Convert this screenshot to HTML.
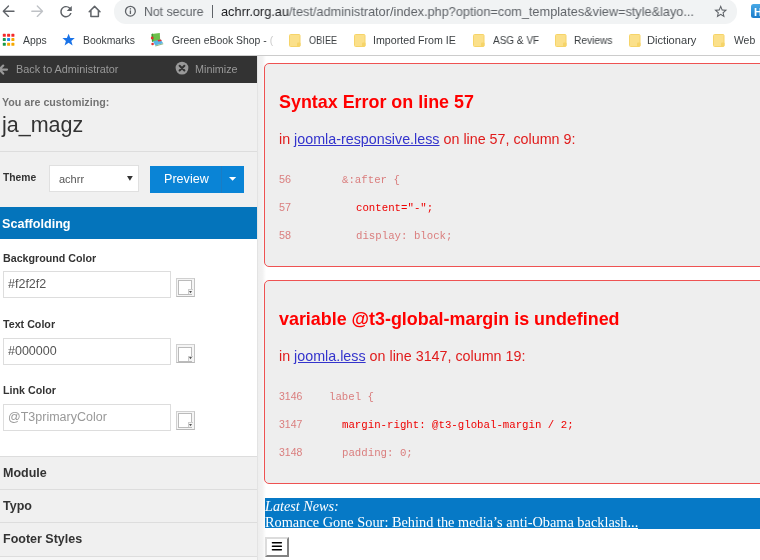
<!DOCTYPE html>
<html><head><meta charset="utf-8">
<style>
*{margin:0;padding:0;box-sizing:border-box}
html,body{width:760px;height:560px;overflow:hidden;background:#fff;font-family:"Liberation Sans",sans-serif;position:relative}
.a{position:absolute;white-space:nowrap;line-height:1;will-change:transform}
.mono{font-family:"Liberation Mono",monospace}
.bm{top:36px;font-size:10.4px;color:#3c4043}
.serif{font-family:"Liberation Serif",serif}
</style></head><body>

<!-- toolbar -->
<svg class="a" style="left:0;top:0" width="110" height="24" viewBox="0 0 110 24" fill="none" stroke-linecap="round" stroke-linejoin="round">
 <g stroke="#5f6368" stroke-width="1.35"><path d="M3.3 11.2H14M8.5 6L3.3 11.2L8.5 16.4"/></g>
 <g stroke="#bfc2c6" stroke-width="1.35"><path d="M31.8 11.2H42.5M37.3 6L42.5 11.2L37.3 16.4"/></g>
 <path transform="translate(57.4 3.0) scale(0.72)" d="M17.65 6.35A7.958 7.958 0 0 0 12 4c-4.42 0-7.99 3.58-7.99 8s3.57 8 7.99 8c3.73 0 6.84-2.55 7.73-6h-2.08A5.99 5.99 0 0 1 12 18c-3.310 0-6-2.69-6-6s2.69-6 6-6c1.66 0 3.14.69 4.22 1.78L13 11h7V4l-2.350 2.350z" fill="#5f6368" stroke="none"/>
 
 <path d="M89.2 11.8L94.6 6.4L100 11.8M90.9 10.5V16.6H98.4V10.5" stroke="#5f6368" stroke-width="1.5"/>
</svg>
<div class="a" style="left:114px;top:-1px;width:623px;height:24.5px;background:#f1f3f4;border-radius:12px"></div>
<svg class="a" style="left:124px;top:5px" width="13" height="13" viewBox="0 0 13 13"><circle cx="6.4" cy="6.2" r="4.9" fill="none" stroke="#5f6368" stroke-width="1.3"/><rect x="5.75" y="5.4" width="1.3" height="3.6" fill="#5f6368"/><rect x="5.75" y="3.2" width="1.3" height="1.3" fill="#5f6368"/></svg>
<div class="a" style="left:144.3px;top:5.7px;font-size:12.8px;color:#5f6368;transform-origin:0 0;transform:scaleX(0.96)">Not secure</div>
<div class="a" style="left:211.5px;top:5px;width:1.2px;height:13px;background:#5f6368"></div>
<div class="a" style="left:220.5px;top:5.7px;font-size:12.8px;color:#202124;transform-origin:0 0;transform:scaleX(0.994)">achrr.org.au<span style="color:#5f6368">/test/administrator/index.php?option=com_templates&amp;view=style&amp;layo...</span></div>
<svg class="a" style="left:713px;top:4px" width="16" height="16" viewBox="0 0 16 16"><path transform="translate(-0.1 -0.2) scale(0.65)" d="M22 9.24l-7.19-.62L12 2 9.19 8.63 2 9.24l5.46 4.73L5.82 21 12 17.27 18.18 21l-1.63-7.03L22 9.24zM12 15.4l-3.76 2.27 1-4.28-3.32-2.88 4.38-.38L12 6.1l1.71 4.04 4.38.38-3.32 2.88 1 4.28L12 15.4z" fill="#5f6368"/></svg>
<div class="a" style="left:751px;top:4.3px;width:20px;height:14.2px;border-radius:2.5px;background:linear-gradient(#48a9e6,#1a7bc9)"></div>
<div class="a" style="left:754.3px;top:6.5px;font-size:11px;font-weight:bold;color:#fff">H</div>

<!-- bookmarks bar -->
<svg class="a" style="left:2px;top:33px" width="14" height="14" viewBox="0 0 14 14">
 <rect x="0.8" y="0.8" width="3" height="3" rx="0.6" fill="#f42a2a"/><rect x="5.1" y="0.8" width="3" height="3" rx="0.6" fill="#f42a2a"/><rect x="9.4" y="0.8" width="3" height="3" rx="0.6" fill="#f42a2a"/>
 <rect x="0.8" y="5.1" width="3" height="3" rx="0.6" fill="#1a9a4a"/><rect x="5.1" y="5.1" width="3" height="3" rx="0.6" fill="#1e88f0"/><rect x="9.4" y="5.1" width="3" height="3" rx="0.6" fill="#f5a800"/>
 <rect x="0.8" y="9.8" width="3" height="3" rx="0.6" fill="#1a9a4a"/><rect x="5.1" y="9.8" width="3" height="3" rx="0.6" fill="#f5a800"/><rect x="9.4" y="9.8" width="3" height="3" rx="0.6" fill="#f5a800"/>
</svg>
<div class="a bm" style="left:23px">Apps</div>
<svg class="a" style="left:61.5px;top:32.5px" width="14" height="14" viewBox="0 0 14 14"><path d="M6.6 0.7L8.3 5L12.8 5.1L9.3 7.9L10.6 12.4L6.6 9.8L2.6 12.4L3.9 7.9L0.4 5.1L4.9 5Z" fill="#1a73e8"/></svg>
<div class="a bm" style="left:83px">Bookmarks</div>
<svg class="a" style="left:150px;top:32px" width="15" height="16" viewBox="0 0 15 16">
 <path d="M1.6 2L9.8 1L10.2 8.8L2 9.8Z" fill="#6cc04a"/><path d="M1.6 2L3 1.5L3.4 9.5L2 9.8Z" fill="#3f9a35"/>
 <circle cx="2.2" cy="6" r="1.4" fill="#e23030"/>
 <path d="M3 9.2L10.5 7.6L13.2 11.2L5.2 13.6Z" fill="#5ab4e6"/><path d="M5.2 13.6L13.2 11.2L13.3 12.3L5.4 14.6Z" fill="#8fb98a"/>
 <path d="M7.5 8L11 7.4L11.8 9L8.3 9.6Z" fill="#e23030"/><circle cx="2.6" cy="12" r="1.3" fill="#e23030"/>
</svg>
<div class="a bm" style="left:171.5px">Green eBook Shop - <span style="color:#ccc">(</span></div>
<svg class="a" style="left:289.3px;top:33.5px" width="12" height="13" viewBox="0 0 12 13"><rect x="0.5" y="0.5" width="10.5" height="12" rx="1" fill="#fbe08a" stroke="#f6d469"/><rect x="8" y="8.5" width="3.5" height="4" rx="1" fill="#f6d469"/></svg>
<div class="a bm" style="left:309.3px;transform-origin:0 0;transform:scaleX(0.887)">OBIEE</div>
<svg class="a" style="left:353.8px;top:33.5px" width="12" height="13" viewBox="0 0 12 13"><rect x="0.5" y="0.5" width="10.5" height="12" rx="1" fill="#fbe08a" stroke="#f6d469"/><rect x="8" y="8.5" width="3.5" height="4" rx="1" fill="#f6d469"/></svg>
<div class="a bm" style="left:373.4px;transform-origin:0 0;transform:scaleX(1.026)">Imported From IE</div>
<svg class="a" style="left:472.8px;top:33.5px" width="12" height="13" viewBox="0 0 12 13"><rect x="0.5" y="0.5" width="10.5" height="12" rx="1" fill="#fbe08a" stroke="#f6d469"/><rect x="8" y="8.5" width="3.5" height="4" rx="1" fill="#f6d469"/></svg>
<div class="a bm" style="left:492.8px;transform-origin:0 0;transform:scaleX(0.9625)">ASG &amp; VF</div>
<svg class="a" style="left:555.3px;top:33.5px" width="12" height="13" viewBox="0 0 12 13"><rect x="0.5" y="0.5" width="10.5" height="12" rx="1" fill="#fbe08a" stroke="#f6d469"/><rect x="8" y="8.5" width="3.5" height="4" rx="1" fill="#f6d469"/></svg>
<div class="a bm" style="left:574.3px;transform-origin:0 0;transform:scaleX(0.98)">Reviews</div>
<svg class="a" style="left:628.5px;top:33.5px" width="12" height="13" viewBox="0 0 12 13"><rect x="0.5" y="0.5" width="10.5" height="12" rx="1" fill="#fbe08a" stroke="#f6d469"/><rect x="8" y="8.5" width="3.5" height="4" rx="1" fill="#f6d469"/></svg>
<div class="a bm" style="left:647.4px;transform-origin:0 0;transform:scaleX(1.069)">Dictionary</div>
<svg class="a" style="left:713.3px;top:33.5px" width="12" height="13" viewBox="0 0 12 13"><rect x="0.5" y="0.5" width="10.5" height="12" rx="1" fill="#fbe08a" stroke="#f6d469"/><rect x="8" y="8.5" width="3.5" height="4" rx="1" fill="#f6d469"/></svg>
<div class="a bm" style="left:733.5px">Web</div>
<div class="a" style="left:0;top:54.5px;width:760px;height:1px;background:#ccc"></div>

<!-- sidebar -->
<div class="a" style="left:0;top:56px;width:257px;height:504px;background:#f0f0f0"></div>
<div class="a" style="left:0;top:56px;width:257px;height:27px;background:#333"></div>
<div class="a" style="left:15.5px;top:63.7px;font-size:10.85px;color:#999">Back to Administrator</div>
<div class="a" style="left:195.3px;top:63.6px;font-size:10.8px;color:#999">Minimize</div>

<svg class="a" style="left:0;top:62px" width="10" height="16" viewBox="0 0 10 16"><path d="M7 7.6H0.5M3.2 3.6L-0.6 7.6L3.2 11.6" fill="none" stroke="#999" stroke-width="2.2" stroke-linecap="round" stroke-linejoin="round"/></svg>
<svg class="a" style="left:175px;top:61px" width="14" height="14" viewBox="0 0 14 14"><circle cx="7" cy="7.1" r="6.4" fill="#999"/><path d="M4.6 4.7L9.4 9.5M9.4 4.7L4.6 9.5" stroke="#333" stroke-width="2" stroke-linecap="round"/></svg>
<div class="a" style="left:2px;top:97px;font-size:10.7px;font-weight:bold;color:#737373">You are customizing:</div>
<div class="a" style="left:2px;top:115.4px;font-size:21.5px;color:#333">ja_magz</div>
<div class="a" style="left:0;top:151px;width:257px;height:1px;background:#ddd"></div>

<div class="a" style="left:3px;top:173.2px;font-size:10.3px;font-weight:bold;color:#333">Theme</div>
<div class="a" style="left:48.5px;top:165px;width:90px;height:26.5px;background:#fff;border:1px solid #e0e0e0"></div>
<div class="a" style="left:58.5px;top:173.5px;font-size:11px;color:#555">achrr</div>
<svg class="a" style="left:126.5px;top:175.5px" width="6" height="5" viewBox="0 0 6 5"><path d="M0 0H5.8L2.9 4.8Z" fill="#333"/></svg>
<div class="a" style="left:150px;top:165.5px;width:94px;height:26.5px;background:#0a84d6"></div>
<div class="a" style="left:221px;top:165.5px;width:1px;height:26.5px;background:#1a7cc4"></div>
<svg class="a" style="left:229px;top:177px" width="8" height="4" viewBox="0 0 8 4"><path d="M0 0H7.2L3.6 3.7Z" fill="#fff"/></svg>
<div class="a" style="left:163.5px;top:172.5px;font-size:12.6px;color:#fff">Preview</div>

<div class="a" style="left:0;top:207px;width:257px;height:32px;background:#0474bb"></div>
<div class="a" style="left:2px;top:217.5px;font-size:12.6px;font-weight:bold;color:#fff">Scaffolding</div>

<div class="a" style="left:0;top:239px;width:257px;height:217px;background:#fff"></div>
<div class="a" style="left:2.5px;top:253px;font-size:10.7px;font-weight:bold;color:#333">Background Color</div>
<div class="a" style="left:2.5px;top:271px;width:168px;height:26.5px;border:1px solid #ddd;background:#fff"></div>
<div class="a" style="left:8px;top:278px;font-size:12.5px;color:#555">#f2f2f2</div>

<div class="a" style="left:176px;top:277.5px;width:19px;height:19.2px;border:1px solid #d0d0d0;border-bottom-color:#b8b8b8;border-right-color:#c4c4c4;background:#f5f5f5"></div>
<div class="a" style="left:178.3px;top:280.0px;width:14px;height:14.6px;border:1px solid #bbb;background:#fff"></div>
<div class="a" style="left:187.5px;top:289.0px;width:5px;height:5px;border-left:1px solid #ccc;border-top:1px solid #ccc;background:#f4f4f4"></div>
<svg class="a" style="left:189px;top:290.8px" width="3" height="3" viewBox="0 0 3 3"><path d="M0 0H3L1.5 2.2Z" fill="#555"/></svg>
<div class="a" style="left:3px;top:319px;font-size:10.7px;font-weight:bold;color:#333">Text Color</div>
<div class="a" style="left:2.5px;top:337.5px;width:168px;height:26.5px;border:1px solid #ddd;background:#fff"></div>
<div class="a" style="left:8px;top:344.5px;font-size:12.5px;color:#555">#000000</div>

<div class="a" style="left:176px;top:344px;width:19px;height:19.2px;border:1px solid #d0d0d0;border-bottom-color:#b8b8b8;border-right-color:#c4c4c4;background:#f5f5f5"></div>
<div class="a" style="left:178.3px;top:346.5px;width:14px;height:14.6px;border:1px solid #bbb;background:#fff"></div>
<div class="a" style="left:187.5px;top:355.5px;width:5px;height:5px;border-left:1px solid #ccc;border-top:1px solid #ccc;background:#f4f4f4"></div>
<svg class="a" style="left:189px;top:357.3px" width="3" height="3" viewBox="0 0 3 3"><path d="M0 0H3L1.5 2.2Z" fill="#555"/></svg>
<div class="a" style="left:2.5px;top:385px;font-size:10.7px;font-weight:bold;color:#333">Link Color</div>
<div class="a" style="left:2.5px;top:404px;width:168px;height:26.5px;border:1px solid #ddd;background:#fff"></div>
<div class="a" style="left:8px;top:410.5px;font-size:12.5px;color:#999">@T3primaryColor</div>

<div class="a" style="left:176px;top:410.5px;width:19px;height:19.2px;border:1px solid #d0d0d0;border-bottom-color:#b8b8b8;border-right-color:#c4c4c4;background:#f5f5f5"></div>
<div class="a" style="left:178.3px;top:413.0px;width:14px;height:14.6px;border:1px solid #bbb;background:#fff"></div>
<div class="a" style="left:187.5px;top:422.0px;width:5px;height:5px;border-left:1px solid #ccc;border-top:1px solid #ccc;background:#f4f4f4"></div>
<svg class="a" style="left:189px;top:423.8px" width="3" height="3" viewBox="0 0 3 3"><path d="M0 0H3L1.5 2.2Z" fill="#555"/></svg>
<div class="a" style="left:0;top:456px;width:257px;height:1px;background:#ddd"></div>
<div class="a" style="left:2.5px;top:466.5px;font-size:12.5px;font-weight:bold;color:#333">Module</div>
<div class="a" style="left:0;top:489px;width:257px;height:1px;background:#ddd"></div>
<div class="a" style="left:2.5px;top:499.5px;font-size:12.5px;font-weight:bold;color:#333">Typo</div>
<div class="a" style="left:0;top:522px;width:257px;height:1px;background:#ddd"></div>
<div class="a" style="left:2.5px;top:532.8px;font-size:12.5px;font-weight:bold;color:#333">Footer Styles</div>
<div class="a" style="left:0;top:556px;width:257px;height:1px;background:#ddd"></div>
<div class="a" style="left:0;top:557px;width:257px;height:3px;background:#f6f6f6"></div>

<!-- content shadow -->
<div class="a" style="left:257px;top:56px;width:9px;height:504px;background:linear-gradient(to right,#ddd,#eee 15%,#f2f2f2 60%,#fff)"></div>

<!-- error box 1 -->
<div class="a" style="left:264px;top:63px;width:510px;height:204px;background:#eee;border:1px solid #ee5252;border-radius:5px"></div>
<div class="a" style="left:279px;top:93.6px;font-size:17.9px;font-weight:bold;color:#f00">Syntax Error on line 57</div>
<div class="a" style="left:279px;top:131.5px;font-size:14.3px;color:#e01b1b">in <span style="color:#3333cc;text-decoration:underline">joomla-responsive.less</span> on line 57, column 9:</div>
<div class="a" style="left:279px;top:173.6px;font-size:10.8px;color:#da7e7e">56</div>
<div class="a mono" style="left:342px;top:174.5px;font-size:10.72px;color:#da7e7e">&amp;:after {</div>
<div class="a" style="left:279px;top:201.6px;font-size:10.8px;color:#da7e7e">57</div>
<div class="a mono" style="left:356px;top:202.5px;font-size:10.72px;color:#e00">content="-";</div>
<div class="a" style="left:279px;top:229.6px;font-size:10.8px;color:#da7e7e">58</div>
<div class="a mono" style="left:356px;top:230.5px;font-size:10.72px;color:#da7e7e">display: block;</div>

<!-- error box 2 -->
<div class="a" style="left:264px;top:280px;width:510px;height:204.2px;background:#eee;border:1px solid #ee5252;border-radius:5px"></div>
<div class="a" style="left:279px;top:310.6px;font-size:17.9px;font-weight:bold;color:#f00">variable @t3-global-margin is undefined</div>
<div class="a" style="left:279px;top:348.5px;font-size:14.3px;color:#e01b1b">in <span style="color:#3333cc;text-decoration:underline">joomla.less</span> on line 3147, column 19:</div>
<div class="a" style="left:279px;top:391px;font-size:10.5px;color:#da7e7e">3146</div>
<div class="a mono" style="left:328.8px;top:391.8px;font-size:10.72px;color:#da7e7e">label {</div>
<div class="a" style="left:279px;top:419px;font-size:10.5px;color:#da7e7e">3147</div>
<div class="a mono" style="left:342px;top:419.8px;font-size:10.72px;color:#e00">margin-right: @t3-global-margin / 2;</div>
<div class="a" style="left:279px;top:447px;font-size:10.5px;color:#da7e7e">3148</div>
<div class="a mono" style="left:342px;top:447.8px;font-size:10.72px;color:#da7e7e">padding: 0;</div>

<!-- news -->
<div class="a" style="left:264.5px;top:497.5px;width:496px;height:31.2px;background:#0679c6"></div>
<div class="a serif" style="left:265px;top:499px;font-size:14.2px;font-style:italic;color:#fff">Latest News:</div>
<div class="a serif" style="left:265px;top:515px;font-size:14.33px;color:#fff">Romance Gone Sour: Behind the media’s anti-Obama backlash...</div>
<div class="a" style="left:265px;top:527.6px;width:372.5px;height:1.1px;background:#fff"></div>

<div class="a" style="left:264.8px;top:537px;width:24.2px;height:20px;background:#fff;border:2px solid;border-color:#dcdcdc #828282 #828282 #dcdcdc"></div>
<svg class="a" style="left:270px;top:540px" width="14" height="12" viewBox="0 0 14 12"><path d="M2.4 2.7H11.4M2.4 6.2H11.4M2.4 9.8H11.4" stroke="#000" stroke-width="1.4" stroke-linecap="round"/></svg>

</body></html>
